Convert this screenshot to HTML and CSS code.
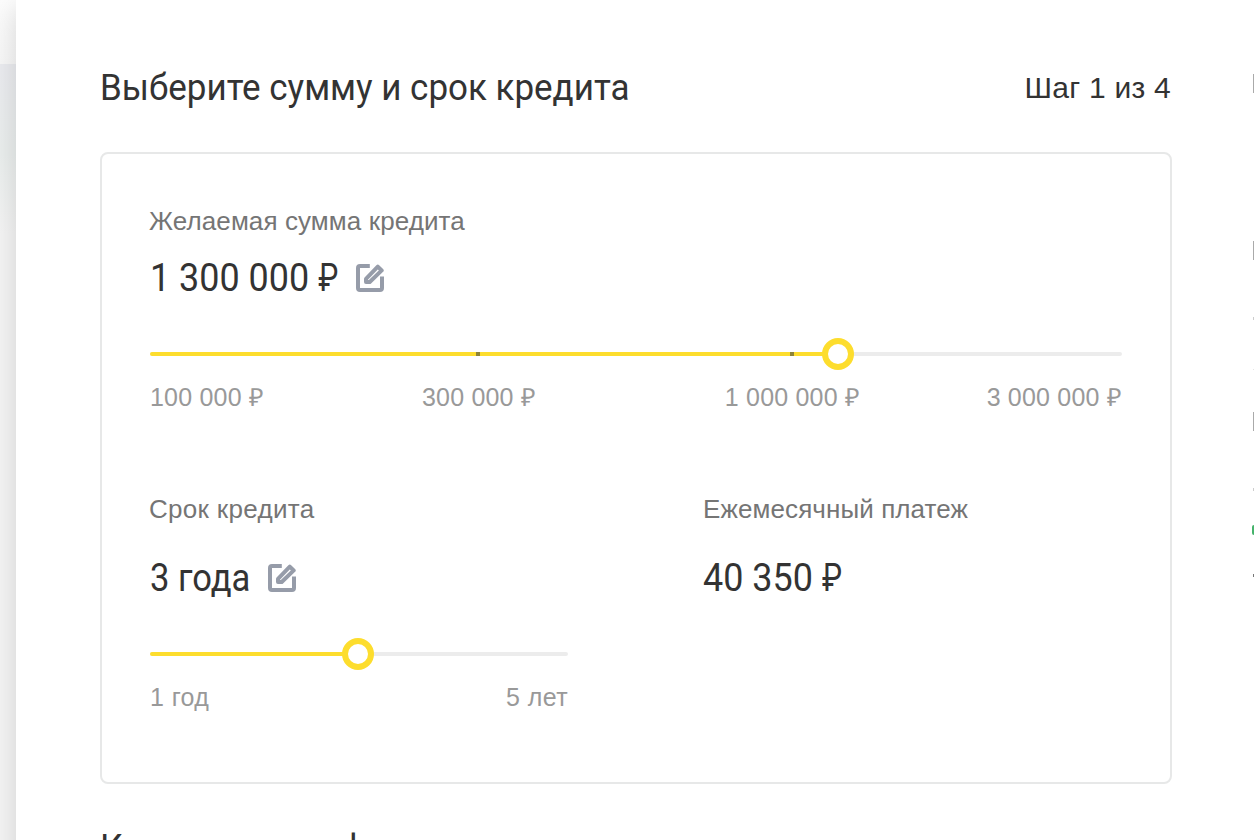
FILE: index.html
```html
<!DOCTYPE html>
<html lang="ru">
<head>
    <meta charset="utf-8">
    <title>Кредит</title>
    <link rel="stylesheet" href="styles.css">
</head>
<body>
    <div class="backdrop">
        <div class="backdrop-header"></div>
        <div class="backdrop-body"></div>
    </div>
    <div class="panel">
        <main class="form">
            <div class="form-header">
                <h1 class="title"><span class="title-text">Выберите сумму и срок кредита</span></h1>
                <div class="step">Шаг 1 из 4</div>
            </div>
            <section class="card">
                <div class="field">
                    <div class="label label-sum">Желаемая сумма кредита</div>
                    <div class="value value-sum">
                        <span class="value-text">1 300 000 <span class="rub">₽</span></span>
                        <svg class="edit" viewBox="0 0 28 28">
                            <path d="M13.8 2H4Q2 2 2 4V24Q2 26 4 26H24Q26 26 26 24V12.5"/>
                            <path class="pencil" d="M10 18V14.9L21.8 2.7L25.7 6.4L13.7 18Z"/>
                        </svg>
                    </div>
                    <div class="slider">
                        <div class="fill" style="width: 688px"></div>
                        <i class="tick" style="left: 328px"></i>
                        <i class="tick" style="left: 642px"></i>
                        <div class="knob" style="left: 688px"></div>
                    </div>
                    <div class="scale scale-sum">
                        <span>100 000 ₽</span>
                        <span>300 000 ₽</span>
                        <span>1 000 000 ₽</span>
                        <span>3 000 000 ₽</span>
                    </div>
                </div>
                <div class="columns">
                    <div class="field">
                        <div class="label label-term">Срок кредита</div>
                        <div class="value value-term">
                            <span class="value-text">3 года</span>
                            <svg class="edit" viewBox="0 0 28 28">
                                <path d="M13.8 2H4Q2 2 2 4V24Q2 26 4 26H24Q26 26 26 24V12.5"/>
                                <path class="pencil" d="M10 18V14.9L21.8 2.7L25.7 6.4L13.7 18Z"/>
                            </svg>
                        </div>
                        <div class="slider">
                            <div class="fill" style="width: 208px"></div>
                            <div class="knob" style="left: 208px"></div>
                        </div>
                        <div class="scale scale-term">
                            <span>1 год</span>
                            <span>5 лет</span>
                        </div>
                    </div>
                    <div class="field">
                        <div class="label label-payment">Ежемесячный платеж</div>
                        <div class="value value-payment">
                            <span class="value-text">40 350 <span class="rub">₽</span></span>
                        </div>
                    </div>
                </div>
            </section>
            <h2 class="title title-next"><span class="title-text">Контактная информация</span></h2>
        </main>
        <aside class="sidebar">
            <div class="mark mark-title"></div>
            <div class="mark mark-title second"></div>
            <div class="mark mark-dot"></div>
            <div class="mark mark-line"></div>
            <div class="mark mark-title third"></div>
            <div class="mark mark-dot fourth"></div>
            <div class="mark mark-green"></div>
            <div class="mark mark-dot last"></div>
        </aside>
    </div>
</body>
</html>
```
FILE: styles.css
```css
* {
    box-sizing: border-box;
}

body {
    margin: 0;
    height: 840px;
    display: flex;
    overflow: hidden;
    font-family: "Liberation Sans", Arial, sans-serif;
    color: #333;
    background: #fff;
}

.backdrop {
    width: 16px;
    display: flex;
    flex-direction: column;
}

.backdrop-header {
    height: 64px;
    background: linear-gradient(#fcfcfc, #f7f7f7);
}

.backdrop-body {
    flex: 1;
    background: linear-gradient(#eaebef, #eaeeed 90px, #f4f4f4 170px);
}

.panel {
    flex: 1;
    display: flex;
    min-width: 0;
    height: 880px;
    padding: 64px 0 0 84px;
    background: #fff;
    box-shadow: 0 8px 26px rgba(0, 0, 0, 0.14);
}

.form {
    flex: 0 0 1072px;
}

.form-header {
    display: flex;
    justify-content: space-between;
    height: 48px;
    line-height: 48px;
}

.title {
    margin: 0;
    font-family: Roboto, sans-serif;
    font-size: 37px;
    font-weight: 400;
    line-height: 48px;
    white-space: nowrap;
}

.title-next {
    margin-top: 40px;
}

/* narrow the headline face */
.title-text,
.value-text {
    display: inline-block;
    transform: scaleX(0.945);
    transform-origin: left center;
}

.step {
    margin-right: 1px;
    font-size: 30px;
    letter-spacing: 0.25px;
    white-space: nowrap;
}

.card {
    height: 632px;
    margin-top: 40px;
    padding: 49px 48px;
    border: 2px solid #e7e8e8;
    border-radius: 8px;
}

.label {
    margin-left: -1px;
    font-size: 26px;
    line-height: 36px;
    letter-spacing: 0.1px;
    color: #757575;
    white-space: nowrap;
}

.label-term {
    letter-spacing: 0.3px;
}

.value {
    display: flex;
    align-items: center;
    gap: 18px;
    height: 44px;
    margin-top: 17px;
    font-family: Roboto, sans-serif;
    font-size: 38px;
    white-space: nowrap;
}

.value-sum .value-text {
    width: 188px;
}

.value-term .value-text {
    width: 100px;
    transform: scaleX(0.91);
}

.columns .value {
    margin-top: 29px;
}

.value-payment {
    margin-left: -1px;
}

.rub {
    display: inline-block;
    transform: scaleX(0.84);
    transform-origin: left center;
}

.edit {
    width: 28px;
    height: 28px;
    fill: none;
    stroke: #969ca9;
    stroke-width: 4;
    stroke-linejoin: round;
}

.slider {
    position: relative;
    height: 4px;
    margin-top: 52px;
    border-radius: 2px;
    background: #ececec;
}

.fill {
    height: 4px;
    border-radius: 2px;
    background: #fddd2d;
}

.tick {
    position: absolute;
    top: 0;
    width: 4px;
    height: 4px;
    margin-left: -2px;
    background: #8e8437;
}

.knob {
    position: absolute;
    top: -14px;
    width: 32px;
    height: 32px;
    margin-left: -16px;
    border: 6px solid #fddd2d;
    border-radius: 50%;
    background: #fff;
}

.scale {
    margin-top: 25px;
    font-size: 25px;
    line-height: 32px;
    letter-spacing: 0.2px;
    color: #999;
    white-space: nowrap;
}

.scale-sum {
    display: grid;
    grid-template-columns: 172px 314px 313px 173px;
    text-align: center;
}

.scale-sum span:first-child {
    text-align: left;
}

.scale-sum span:last-child {
    text-align: right;
}

.scale-term {
    display: flex;
    justify-content: space-between;
    letter-spacing: 0.4px;
}

.columns {
    display: grid;
    grid-template-columns: 418px 418px;
    gap: 136px;
    margin-top: 78px;
}

.sidebar {
    flex: 0 0 2px;
    margin-left: 80px;
}

.mark {
    width: 1px;
    margin-left: 1px;
    background: #aaa;
}

.mark-title {
    height: 19px;
    margin-top: 10px;
}

.second {
    margin-top: 148px;
}

.mark-dot {
    height: 3px;
    margin-top: 57px;
    background: #ccc;
}

.mark-line {
    height: 1px;
    margin-top: 49px;
    background: #e5e5e5;
}

.third {
    margin-top: 42px;
}

.fourth {
    margin-top: 57px;
}

.mark-green {
    width: 2px;
    height: 10px;
    margin: 34px 0 0;
    border-radius: 2px 0 0 2px;
    background: #45b36b;
}

.last {
    margin-top: 39px;
    background: #777;
}
```
